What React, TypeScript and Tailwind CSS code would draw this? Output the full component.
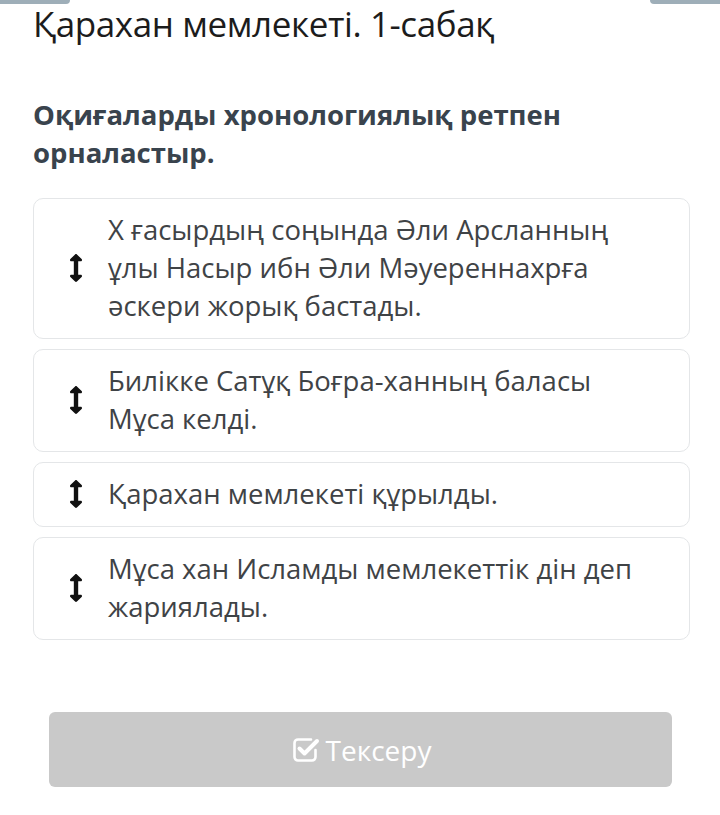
import { FaArrowsAltV } from "react-icons/fa";

const items = [
  "Х ғасырдың соңында Әли Арсланның ұлы Насыр ибн Әли Мәуереннахрға әскери жорық бастады.",
  "Билікке Сатұқ Боғра-ханның баласы Мұса келді.",
  "Қарахан мемлекеті құрылды.",
  "Мұса хан Исламды мемлекеттік дін деп жариялады.",
];

function CheckSquare() {
  return (
    <svg width="30" height="30" viewBox="0 0 30 30" fill="none" stroke="currentColor">
      <path d="M21 4.5H8a3.5 3.5 0 0 0-3.5 3.5v14A3.5 3.5 0 0 0 8 25.5h14a3.5 3.5 0 0 0 3.5-3.5v-7" strokeWidth="2.6" strokeLinecap="round" />
      <path d="M9.5 13.5l5 5L27 6" strokeWidth="4" strokeLinecap="round" strokeLinejoin="round" />
    </svg>
  );
}

export default function App() {
  return (
    <div className="relative w-[720px] h-[815px] bg-white overflow-hidden" style={{ fontFamily: '"Open Sans", "Noto Sans", sans-serif' }}>
      {/* top tabs, mostly scrolled out of view */}
      <div className="absolute top-0 left-0 w-[70px] h-[4px] bg-[#9eaeb8] rounded-br-lg" />
      <div className="absolute top-0 right-0 w-[70px] h-[4px] bg-[#9eaeb8] rounded-bl-lg" />

      <h1 className="px-[33px] text-[35px] leading-[48px] text-[#1c1c1c] tracking-[-0.4px]">
        Қарахан мемлекеті. 1-сабақ
      </h1>

      <h2 className="px-[33px] mt-[48px] text-[27.5px] leading-[38px] font-bold text-[#39434d] w-[660px]">
        Оқиғаларды хронологиялық ретпен орналастыр.
      </h2>

      <div className="mx-[33px] mt-[26px] flex flex-col gap-[10px] w-[657px]">
        {items.map((t) => (
          <div key={t} className="flex items-center border border-[#e4e6e8] rounded-[10px] pt-[12px] pb-[13px] pr-[40px]">
            <div className="w-[74px] flex justify-center shrink-0 pl-[10px]">
              <FaArrowsAltV className="w-[14px] h-[28px] text-[#111]" />
            </div>
            <div className="text-[27.5px] leading-[38px] text-[#3f4346]">{t}</div>
          </div>
        ))}
      </div>

      <div className="mx-[49px] mt-[72px] h-[75px] w-[623px] bg-[#c9c9c9] rounded-[6px] flex items-center justify-center gap-[6px] text-white">
        <CheckSquare />
        <span className="text-[28px] leading-none">Тексеру</span>
      </div>
    </div>
  );
}
